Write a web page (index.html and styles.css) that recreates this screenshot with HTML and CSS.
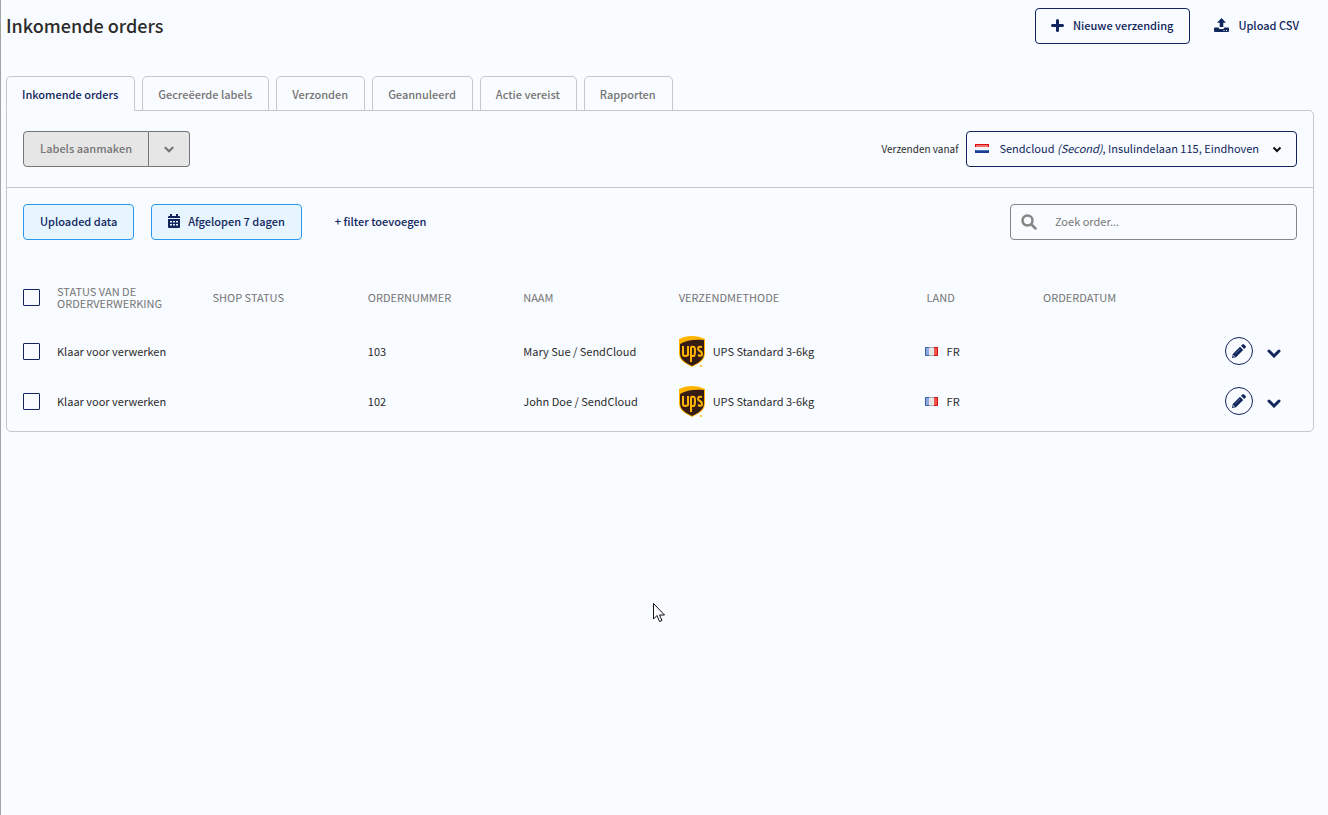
FILE: index.html
```html
<!DOCTYPE html>
<html lang="nl">
<head>
    <meta charset="UTF-8">
    <meta name="viewport" content="width=device-width, initial-scale=1.0">
    <title>Inkomende orders</title>
    <link rel="stylesheet" href="styles.css">
</head>
<body>
    <svg class="sprite" aria-hidden="true">
        <symbol id="icon-chevron" viewBox="0 0 14 9">
            <path d="M2 2l5 5 5-5" fill="none" stroke="currentColor" stroke-width="3" stroke-linecap="round"/>
        </symbol>
        <symbol id="icon-pencil" viewBox="0 0 14 14">
            <path fill="currentColor" d="M0 14l.8-4L8 2.800 11.200 6 4 13.200zM9 1.800L10.400.4q.8-.8 1.600 0L13.600 2q.8.800 0 1.600L12.200 5z"/>
            <path fill="#f8fbff" d="M1.500 11l1.500 1.500-1.700.3z"/>
            <path stroke="#f8fbff" stroke-width=".3" d="M3.500 9.500l4.500-4.500"/>
        </symbol>
        <symbol id="logo-ups" viewBox="0 0 26 31">
            <path fill="#ffb500" d="M0 3C4 1 8 0 13 0s9 1 13 3v14c0 7-5 10-13 14C5 27 0 24 0 17z"/>
            <path fill="#351c15" d="M1 8C7 4 16 3 25 4v13c0 6-4 9-12 13C5 26 1 23 1 17z"/>
            <path fill="none" stroke="#ffb500" stroke-width="2" d="M4 10v8q0 2 2 2t3-1v-9M12 26V12q0-2 3-1 1 0 1 4t-1 5h-3M23 11q-4-1-4 2 0 1 2 2t2 3q0 3-4 1"/>
            <circle cx="22" cy="30" r="1" fill="#ffb500"/>
        </symbol>
        <symbol id="flag-fr" viewBox="0 0 13 9">
            <path fill="#e6e6e6" d="M0 0h13v9H0z"/>
            <path fill="#8fa9de" d="M0 0h4v9H0z"/>
            <path fill="#f0554d" d="M9 0h4v9H9z"/>
            <path fill="none" stroke="#3c5fa8" d="M4 .5H.5v8H4"/>
            <path fill="none" stroke="#aab" d="M4 .5h5M4 8.500h5"/>
            <path fill="none" stroke="#d3120f" d="M9 .5h3.500v8H9"/>
        </symbol>
    </svg>

    <main class="page">
        <header class="page-header">
            <h1>Inkomende orders</h1>
            <div class="header-actions">
                <button class="btn btn-outline">
                    <svg class="icon-plus" viewBox="0 0 13 13"><path d="M6.500 1.500v10M1.500 6.500h10" stroke="currentColor" stroke-width="3" stroke-linecap="round"/></svg>
                    Nieuwe verzending
                </button>
                <button class="btn btn-plain">
                    <svg class="icon-upload" viewBox="0 0 15 14"><path fill="currentColor" d="M7.500 0L12 4.800H9.300V9H5.700V4.800H3zM0 10.500q0-1 1-1h3.700q0 1.500 1.500 1.500h2.600q1.500 0 1.500-1.500H14q1 0 1 1V13q0 1-1 1H1q-1 0-1-1z"/><path stroke="#f8fbff" d="M9.500 12.500h1M12 12.500h1"/></svg>
                    Upload CSV
                </button>
            </div>
        </header>

        <nav class="tabs">
            <a href="#" class="tab active">Inkomende orders</a>
            <a href="#" class="tab">Gecreëerde labels</a>
            <a href="#" class="tab">Verzonden</a>
            <a href="#" class="tab">Geannuleerd</a>
            <a href="#" class="tab">Actie vereist</a>
            <a href="#" class="tab">Rapporten</a>
        </nav>

        <section class="panel">
            <div class="toolbar">
                <div class="split-button">
                    <button class="btn" disabled>Labels aanmaken</button>
                    <button class="btn btn-toggle" disabled aria-label="Meer opties"><svg class="icon-chevron"><use href="#icon-chevron"/></svg></button>
                </div>
                <div class="sender">
                    <label for="sender">Verzenden vanaf</label>
                    <button id="sender" class="btn btn-outline sender-select" aria-haspopup="listbox">
                        <svg class="flag-nl" viewBox="0 0 14 9">
                            <path fill="#f4f4f6" d="M0 0h14v9H0z"/>
                            <path fill="#e00d10" d="M0 0h14v3H0z"/>
                            <path fill="#f0716e" d="M1 1h12v2H1z"/>
                            <path fill="#1b3d95" d="M0 6h14v3H0z"/>
                            <path fill="#4f70bd" d="M1 6h12v1H1z"/>
                        </svg>
                        <span class="sender-name">Sendcloud <em>(Second)</em>, Insulindelaan 115, Eindhoven</span>
                        <svg class="icon-chevron small" viewBox="0 0 10 7"><path d="M1.500 1.500L5 5l3.500-3.500" fill="none" stroke="currentColor" stroke-width="2"/></svg>
                    </button>
                </div>
            </div>

            <div class="filters">
                <button class="btn btn-filter">Uploaded data</button>
                <button class="btn btn-filter">
                    <svg class="icon-calendar" viewBox="0 0 12 14"><path fill="currentColor" fill-rule="evenodd" d="M0 5h12v8q0 1-1 1H1q-1 0-1-1zM2 7v1.500h2V7zm3 0v1.500h2V7zm3 0v1.500h2V7zM2 10v1.500h2V10zm3 0v1.500h2V10zm3 0v1.500h2V10zM0 4V3q0-1 1-1h1V0h2v2h4V0h2v2h1q1 0 1 1v1z"/></svg>
                    Afgelopen 7 dagen
                </button>
                <button class="btn btn-add">+ filter toevoegen</button>
                <div class="search">
                    <svg class="icon-search" viewBox="0 0 16 16"><circle cx="6.500" cy="6.500" r="5" fill="none" stroke="currentColor" stroke-width="2.500"/><path d="M10.500 10.500l4 4" stroke="currentColor" stroke-width="2.500" stroke-linecap="round"/></svg>
                    <input type="text" placeholder="Zoek order..." aria-label="Zoek order">
                </div>
            </div>

            <table class="orders">
                <colgroup>
                    <col class="col-check">
                    <col class="col-text">
                    <col class="col-text">
                    <col class="col-text">
                    <col class="col-text">
                    <col class="col-method">
                    <col class="col-country">
                    <col>
                    <col class="col-actions">
                </colgroup>
                <thead>
                    <tr>
                        <th><input type="checkbox" aria-label="Alles selecteren"></th>
                        <th>Status van de orderverwerking</th>
                        <th>Shop status</th>
                        <th>Ordernummer</th>
                        <th>Naam</th>
                        <th>Verzendmethode</th>
                        <th class="country-head">Land</th>
                        <th>Orderdatum</th>
                        <th></th>
                    </tr>
                </thead>
                <tbody>
                    <tr>
                        <td><input type="checkbox" aria-label="Order 103 selecteren"></td>
                        <td>Klaar voor verwerken</td>
                        <td></td>
                        <td>103</td>
                        <td>Mary Sue / SendCloud</td>
                        <td><div class="cell"><svg class="logo-ups"><use href="#logo-ups"/></svg>UPS Standard 3-6kg</div></td>
                        <td><div class="cell"><svg class="flag-fr"><use href="#flag-fr"/></svg>FR</div></td>
                        <td></td>
                        <td>
                            <div class="row-actions">
                                <button class="btn-edit" aria-label="Bewerken"><svg class="icon-pencil"><use href="#icon-pencil"/></svg></button>
                                <button class="btn-expand" aria-label="Uitklappen"><svg class="icon-chevron large"><use href="#icon-chevron"/></svg></button>
                            </div>
                        </td>
                    </tr>
                    <tr>
                        <td><input type="checkbox" aria-label="Order 102 selecteren"></td>
                        <td>Klaar voor verwerken</td>
                        <td></td>
                        <td>102</td>
                        <td>John Doe / SendCloud</td>
                        <td><div class="cell"><svg class="logo-ups"><use href="#logo-ups"/></svg>UPS Standard 3-6kg</div></td>
                        <td><div class="cell"><svg class="flag-fr"><use href="#flag-fr"/></svg>FR</div></td>
                        <td></td>
                        <td>
                            <div class="row-actions">
                                <button class="btn-edit" aria-label="Bewerken"><svg class="icon-pencil"><use href="#icon-pencil"/></svg></button>
                                <button class="btn-expand" aria-label="Uitklappen"><svg class="icon-chevron large"><use href="#icon-chevron"/></svg></button>
                            </div>
                        </td>
                    </tr>
                </tbody>
            </table>
        </section>
    </main>

    <svg class="cursor" viewBox="0 0 12 19" aria-hidden="true"><path d="M.5.5v15.500l3.500-3.500 2.500 6 2.500-1-2.500-5.500h5z" fill="#fff" stroke="#111"/></svg>
</body>
</html>
```

FILE: styles.css
```css
* {
    box-sizing: border-box;
}
body {
    margin: 0;
    min-height: 100vh;
    border-left: 1px solid #a5a3a3;
    background-color: #f8fbff;
    color: #2b2b2b;
    font: 11px / 20px "Noto Sans CJK SC", "Open Sans", sans-serif;
}
button,
input {
    font: inherit;
    color: inherit;
}
button {
    cursor: pointer;
}
svg {
    flex: none;
}
.sprite {
    display: none;
}
.page {
    padding: 8px 14px 0 5px;
}
.page-header {
    display: flex;
    justify-content: space-between;
    height: 36px;
    align-items: center;
}
h1 {
    margin: 0;
    padding-bottom: 2px;
    font-size: 18px;
    font-weight: 500;
}
.header-actions {
    display: flex;
    gap: 8px;
}
.btn {
    display: flex;
    align-items: center;
    height: 36px;
    padding: 0 16px 2px 15px;
    border: 1px solid transparent;
    border-radius: 4px;
    background: none;
    color: #11265c;
    font-weight: 500;
    white-space: nowrap;
}
.btn-outline {
    border-color: #11265c;
}
.btn-plain {
    padding-right: 14px;
}
.icon-plus {
    width: 13px;
    height: 13px;
    margin-right: 9px;
}
.icon-upload {
    width: 15px;
    height: 14px;
    margin-right: 9px;
}
.tabs {
    display: flex;
    gap: 7px;
    margin-top: 32px;
}
.tab {
    height: 35px;
    padding: 7px 16px 0 15px;
    margin-bottom: -1px;
    border: 1px solid #c5c7ca;
    border-radius: 5px 5px 0 0;
    color: #757575;
    font-weight: 500;
    text-decoration: none;
}
.tab.active {
    z-index: 1;
    border-bottom-color: #f8fbff;
    color: #11265c;
}
.panel {
    padding-bottom: 5px;
    border: 1px solid #c5c7ca;
    border-radius: 0 5px 5px 5px;
}
.toolbar {
    display: flex;
    justify-content: space-between;
    padding: 20px 16px;
    border-bottom: 1px solid #c5c7ca;
}
.split-button {
    display: flex;
}
.split-button .btn {
    padding-left: 16px;
    border-color: #757575;
    border-radius: 4px 0 0 4px;
    background-color: #e6e6e6;
    color: #757575;
    cursor: default;
}
.split-button .btn-toggle {
    padding: 0 15px;
    border-left: 0;
    border-radius: 0 4px 4px 0;
}
.icon-chevron {
    width: 10px;
    height: 7px;
}
.sender {
    display: flex;
    align-items: center;
    gap: 8px;
    font-size: 10px;
}
.sender-select {
    padding: 0 14px 2px 8px;
    font-size: 11px;
    font-weight: 400;
}
.flag-nl {
    width: 14px;
    height: 9px;
    margin-right: 10px;
}
.icon-chevron.small {
    margin: 2px 0 0 13px;
    color: #111;
}
.filters {
    display: flex;
    padding: 16px 16px 0;
}
.btn-filter {
    margin-right: 17px;
    padding-left: 16px;
    border-color: #2a98f0;
    background-color: #e6f5ff;
}
.icon-calendar {
    width: 12px;
    height: 14px;
    margin-right: 8px;
}
.search {
    display: flex;
    align-items: center;
    width: 287px;
    height: 36px;
    margin-left: auto;
    padding: 0 10px;
    border: 1px solid #858585;
    border-radius: 4px;
    color: #858585;
}
.icon-search {
    width: 16px;
    height: 16px;
}
.search input {
    flex: 1;
    min-width: 0;
    padding: 0 0 2px 18px;
    border: 0;
    outline: 0;
    background: none;
    color: #2b2b2b;
}
.search input::placeholder {
    color: #757575;
}
.orders {
    width: calc(100% - 32px);
    margin: 28px 16px 0;
    border-collapse: collapse;
    table-layout: fixed;
}
.col-check {
    width: 34px;
}
.col-text {
    width: 12.2%;
}
.col-method {
    width: 19.3%;
}
.col-country {
    width: 9.3%;
}
.col-actions {
    width: 88px;
}
th,
td {
    height: 50px;
    padding: 0;
    text-align: left;
}
th {
    height: 58px;
    padding-right: 40px;
    color: #757575;
    font-weight: 400;
    line-height: 12px;
    text-transform: uppercase;
}
th:first-child {
    padding: 0;
}
th.country-head {
    padding-left: 2px;
}
input[type="checkbox"] {
    display: block;
    appearance: none;
    width: 17px;
    height: 17px;
    margin: 0;
    border: 1px solid #11265c;
    border-radius: 1px;
}
.cell {
    display: flex;
    align-items: center;
}
.logo-ups {
    width: 26px;
    height: 31px;
    margin-right: 8px;
}
.flag-fr {
    width: 13px;
    height: 9px;
    margin-right: 9px;
}
.row-actions {
    display: flex;
    align-items: center;
    justify-content: flex-end;
    gap: 14px;
    padding-right: 16px;
}
.btn-edit,
.btn-expand {
    display: flex;
    align-items: center;
    justify-content: center;
    padding: 0;
    border: 0;
    background: none;
    color: #11265c;
}
.btn-edit {
    width: 28px;
    height: 28px;
    border: 1px solid #11265c;
    border-radius: 50%;
}
.icon-pencil {
    width: 14px;
    height: 14px;
}
.icon-chevron.large {
    width: 14px;
    height: 9px;
    margin-top: 4px;
}
/* pointer floats above the page */
.cursor {
    position: absolute;
    left: 653px;
    top: 603px;
    width: 12px;
    height: 19px;
}
```
